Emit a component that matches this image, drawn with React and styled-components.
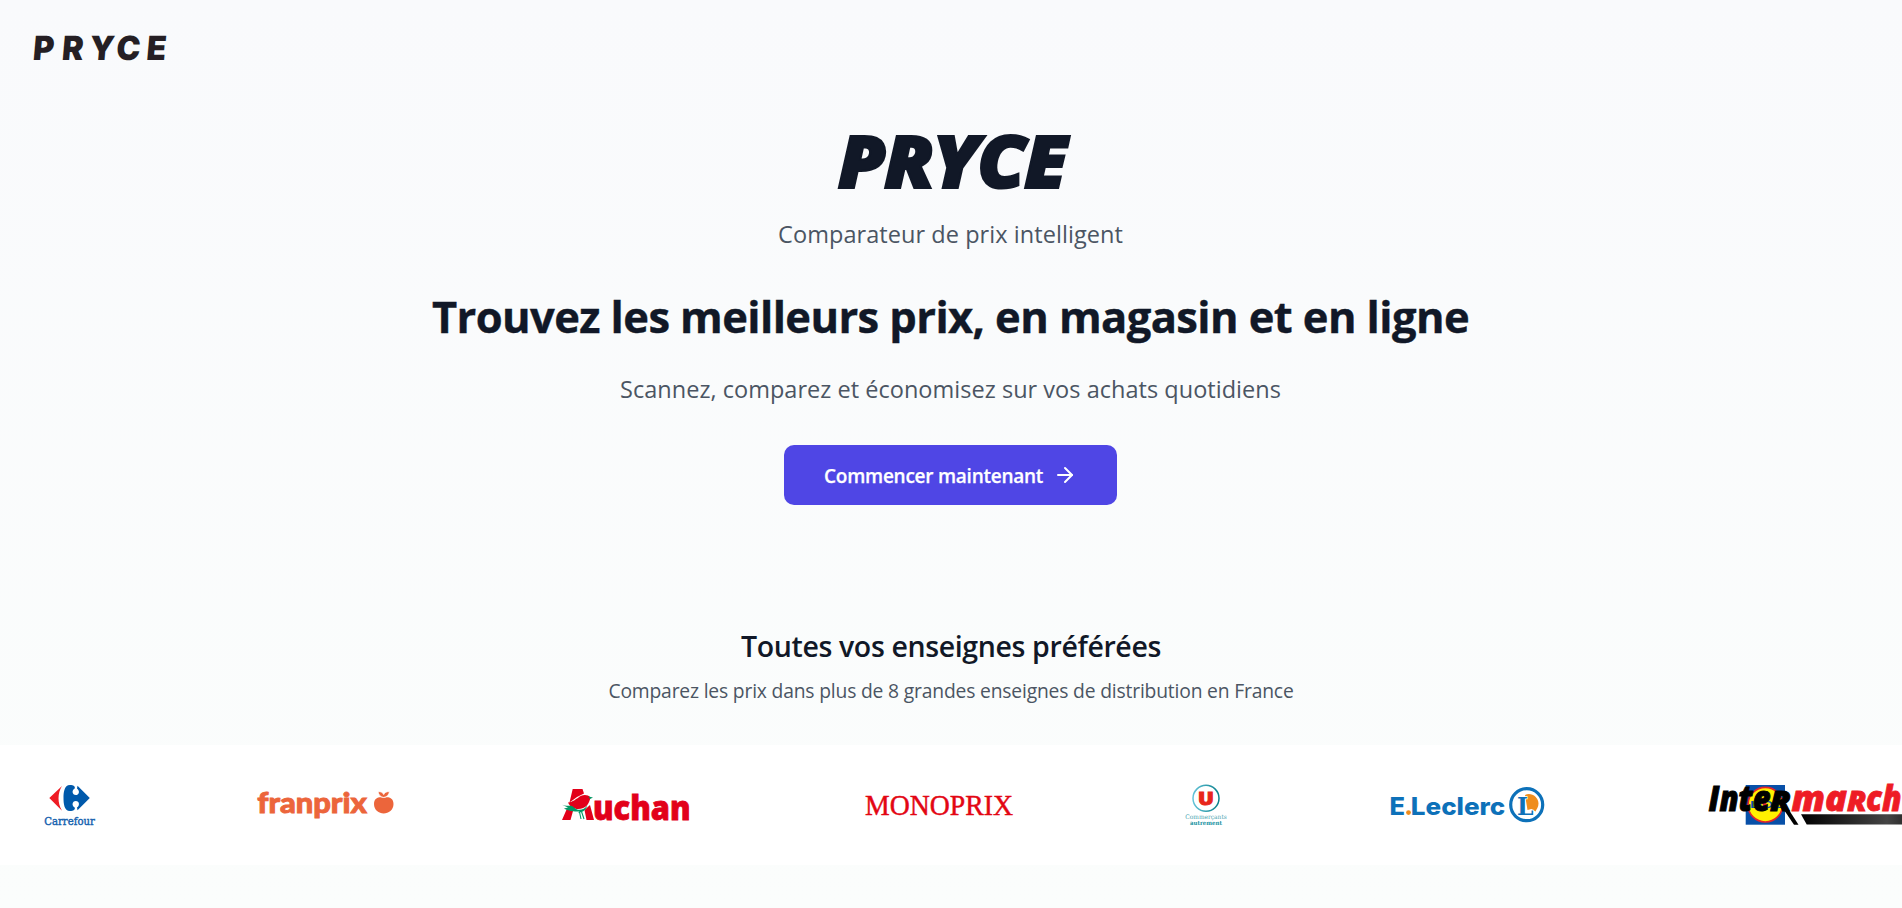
import React from 'react';
import styled, { createGlobalStyle } from 'styled-components';
import { ArrowRight } from 'lucide-react';

const GlobalStyle = createGlobalStyle`
  *, *::before, *::after { box-sizing: border-box; }
  body {
    margin: 0;
    font-family: 'Segoe UI', 'Open Sans', 'Noto Sans', sans-serif;
    color: #111827;
  }
  h1, h2, h3, p { margin: 0; white-space: nowrap; }
`;

const Page = styled.div`
  height: 908px;
  overflow: hidden;
  display: flex;
  flex-direction: column;
  background: linear-gradient(#f9fafc, #fbfdfc);
`;

const Header = styled.header`
  height: 120px;
  padding: 28px 32px;
`;

const HeaderLogo = styled.svg`
  display: block;
  font: 900 33.4px Inter, sans-serif;
  fill: #251f24;
`;

const Hero = styled.main`
  display: flex;
  flex-direction: column;
  align-items: center;
  padding-right: 1px;
`;

const Brand = styled.h1`
  padding-left: 3px;
  font-size: 73px;
  line-height: 80px;
  font-weight: 800;
  font-style: italic;
  letter-spacing: -1.8px;
  -webkit-text-stroke: 2.2px #111827;
  transform: scaleX(1.06);
`;

const Lead = styled.p`
  margin-top: ${(p) => p.$top}px;
  font-size: 23.5px;
  line-height: 32px;
  letter-spacing: ${(p) => p.$spacing}px;
  color: #4b5563;
`;

const Headline = styled.h2`
  margin-top: 39px;
  font-size: 43.5px;
  line-height: 56px;
  font-weight: 700;
  letter-spacing: -0.6px;
  -webkit-text-stroke: 0.4px #111827;
`;

const CallToAction = styled.button`
  display: flex;
  align-items: center;
  justify-content: space-between;
  width: 333px;
  height: 60px;
  margin-top: 40px;
  padding: 0 40px;
  border: 0;
  border-radius: 10px;
  background: #4f46e5;
  color: #fff;
  font-family: inherit;
  font-size: 19px;
  font-weight: 600;
  letter-spacing: -0.25px;
  white-space: nowrap;
`;

const ButtonLabel = styled.span`
  padding-top: 2px;
  -webkit-text-stroke: 0.25px #fff;
`;

const StoresIntro = styled.section`
  display: flex;
  flex-direction: column;
  align-items: center;
  margin-top: 121px;
`;

const StoresTitle = styled.h3`
  font-size: 28.5px;
  line-height: 40px;
  font-weight: 600;
  letter-spacing: -0.37px;
`;

const StoresText = styled.p`
  margin-top: 11px;
  font-size: 19.3px;
  line-height: 28px;
  letter-spacing: -0.18px;
  color: #4b5563;
`;

const Marquee = styled.div`
  display: flex;
  align-items: center;
  gap: 160px;
  height: 120px;
  margin-top: 40px;
  padding-left: 43px;
  overflow: hidden;
  background: #fff;
`;

const StoreLogo = styled.svg`
  flex: none;
  display: block;
  height: 40px;
  overflow: visible;
`;

const Fit = ({ w, children, ...rest }) => (
  <text textLength={w} lengthAdjust="spacingAndGlyphs" {...rest}>{children}</text>
);

const Carrefour = () => (
  <StoreLogo width="53" viewBox="0 0 53 40">
    <path fill="#ee1c25" d="M6.3 13 19 1C14.4 8 14.4 18.500 19 25.700Z" />
    <path fill="#0059ab" d="M27 0C21 0 20.500 8 20.500 13S21 26 27 26C30.500 26 32.500 24.500 31.700 22.500 28.500 21 29 16 32.800 16 36.500 16 37 20.500 34 22.600L34.500 25.300 46.800 13 34.500 .7 34 3.400C37 5.500 36.500 10 32.800 10 29 10 28.500 5 31.700 3.500 32.500 1.500 30.500 0 27 0Z" />
    <Fit x="1.3" y="39.6" w="50.500" fontFamily="DejaVu Serif" fontSize="10.800" fill="#1763af" stroke="#1763af" strokeWidth=".45">Carrefour</Fit>
  </StoreLogo>
);

const Franprix = () => (
  <StoreLogo width="140" viewBox="0 0 140 40">
    <Fit x="1.3" y="28" w="109.500" fontFamily="Lato" fontWeight="900" fontSize="28.500" fill="#ec653b" stroke="#ec653b" strokeWidth=".9">franprix</Fit>
    <path fill="#ec653b" d="M127.700 12.800C131 11.500 137.500 12 137.500 19 137.500 25 132.500 28.500 127.700 28.500S118 25 118 19C118 12 124.500 11.500 127.700 12.800Z" />
    <path fill="#ec653b" stroke="#fff" strokeWidth=".8" d="M122 6.500C125 6.500 127 7.500 127.700 9.500 128.500 7.500 130.500 6.500 133.500 6.500 133 10 130.800 12 127.700 12.500 124.500 12 122.500 10 122 6.500Z" />
  </StoreLogo>
);

const Auchan = () => (
  <StoreLogo width="140" viewBox="0 0 140 40">
    <path fill="#e2001a" d="M16.700 4H26.500L28 8.500 21 12 13.500 17.500ZM11 23.500 17 26 14.500 35H6ZM28.500 25 34 20 38 35H30.500Z" />
    <path fill="#e2001a" d="M12 17.500C17 17 20 14 22.500 12.500 25 10 31 8.500 34.500 12.500 33 19 30 24 22 24 18 24 14 22 12 17.500Z" />
    <path fill="#009864" d="M6 19.800C13 22 15 19.500 18 22.500 22 26.500 28 25 31.500 20.500 30 25 27 26.500 25.500 27L22 28 23.500 26.500C17 27 10 25 8 23.500L12 22.500ZM32.500 11.500 37 12.500 34 14Z" />
    <path d="M23.500 27 25 34M25.500 26.500 28 34" stroke="#009864" strokeWidth="1.100" />
    <Fit x="37" y="34.600" w="97.500" fontFamily="Open Sans" fontWeight="800" fontSize="34" fill="#e2001a" stroke="#e2001a" strokeWidth=".8">uchan</Fit>
  </StoreLogo>
);

const Monoprix = () => (
  <StoreLogo width="164" viewBox="0 0 164 40">
    <Fit x="9" y="29.500" w="148" fontFamily="Liberation Serif" fontSize="29.300" fill="#e30613" stroke="#e30613" strokeWidth=".45">MONOPRIX</Fit>
  </StoreLogo>
);

const SystemeU = () => (
  <StoreLogo width="50" viewBox="0 0 50 40">
    <defs>
      <linearGradient id="u-ring">
        <stop offset="0" stopColor="#63c4d8" />
        <stop offset="1" stopColor="#087e8b" />
      </linearGradient>
    </defs>
    <circle cx="26" cy="13.300" r="13" fill="none" stroke="url(#u-ring)" strokeWidth="1.500" />
    <Fit x="18" y="20.300" w="15.800" fontFamily="Open Sans" fontWeight="800" fontSize="18" fill="#e8251b" stroke="#e8251b" strokeWidth="1">U</Fit>
    <Fit x="5.300" y="34" w="41.500" fontFamily="DejaVu Serif" fontSize="6.300" fill="#4aa5b2">Commerçants</Fit>
    <Fit x="10" y="39.700" w="32" fontFamily="DejaVu Serif" fontWeight="700" fontSize="6" fill="#1592a1">autrement</Fit>
  </StoreLogo>
);

const Leclerc = () => (
  <StoreLogo width="158" viewBox="0 0 158 40">
    <g fontFamily="Inter" fontWeight="800" fontSize="24" fill="#0d71b9">
      <Fit x="-.6" y="29.700" w="15.500">E</Fit>
      <circle cx="18.500" cy="27.600" r="2.400" fill="#ef8d1c" />
      <Fit x="20.800" y="29.700" w="94.500">Leclerc</Fit>
    </g>
    <circle cx="136.700" cy="19.700" r="16" fill="#fff" stroke="#0d71b9" strokeWidth="3.200" />
    <path fill="#ef8d1c" d="M135 10C141 7 148.500 12 148.500 18.500 148.500 22 146.500 24 145.500 26.500L141.500 24 137.500 25Z" />
    <text x="127" y="30" fontFamily="DejaVu Serif" fontWeight="700" fontSize="23.500" fill="#0d71b9" stroke="#fff" strokeWidth="1.600" paintOrder="stroke">L</text>
  </StoreLogo>
);

const IntermarcheLidl = () => (
  <StoreLogo width="216" viewBox="0 0 216 40">
    <defs>
      <linearGradient id="inter-bar">
        <stop offset="0" stopColor="#000" />
        <stop offset=".7" stopColor="#444" />
        <stop offset="1" stopColor="#111" />
      </linearGradient>
    </defs>
    <rect x="37.700" width="39.300" height="39.700" fill="#0850a8" />
    <circle cx="57.300" cy="19.700" r="17.300" fill="#fff000" stroke="#e3242b" strokeWidth="1.600" />
    <Fit x="42" y="23" w="31" fontFamily="Lato" fontWeight="900" fontSize="10" fill="#0850a8">LIDL</Fit>
    <path fill="#e3242b" d="m53 12 5 4 1 7-6-5Z" />
    <g fontFamily="Open Sans" fontStyle="italic" fontWeight="800" fill="#000" stroke="#000" strokeWidth="1">
      <Fit x="0.500" y="26" w="62" fontSize="36">Inte</Fit>
      <Fit x="62" y="26" w="21" fontSize="27.500">R</Fit>
    </g>
    <g fontFamily="Open Sans" fontStyle="italic" fontWeight="800" fill="#ee1c25" stroke="#ee1c25" strokeWidth=".8">
      <Fit x="83.500" y="26" w="55.500" fontSize="36">ma</Fit>
      <Fit x="139" y="26" w="19.500" fontSize="27.500">R</Fit>
      <Fit x="158" y="26" w="35.500" fontSize="36">ch</Fit>
    </g>
    <path d="M74 22 81 25 90.500 39.700H86Z" />
    <path fill="url(#inter-bar)" d="M93 29.300H216V39.500H98.700Z" />
  </StoreLogo>
);

export default function App() {
  return (
    <>
      <GlobalStyle />
      <Page>
        <Header>
          <HeaderLogo width="140" height="40" aria-label="PRYCE">
            <text transform="translate(0 32.3) skewX(-5) scale(.96 1)" x="0.2 30.500 59 87 118.500" y="0">PRYCE</text>
          </HeaderLogo>
        </Header>
        <Hero>
          <Brand>PRYCE</Brand>
          <Lead $top={18} $spacing={0.06}>Comparateur de prix intelligent</Lead>
          <Headline>Trouvez les meilleurs prix, en magasin et en ligne</Headline>
          <Lead $top={28} $spacing={0.03}>Scannez, comparez et économisez sur vos achats quotidiens</Lead>
          <CallToAction>
            <ButtonLabel>Commencer maintenant</ButtonLabel>
            <ArrowRight size={24} />
          </CallToAction>
        </Hero>
        <StoresIntro>
          <StoresTitle>Toutes vos enseignes préférées</StoresTitle>
          <StoresText>Comparez les prix dans plus de 8 grandes enseignes de distribution en France</StoresText>
        </StoresIntro>
        <Marquee>
          <Carrefour />
          <Franprix />
          <Auchan />
          <Monoprix />
          <SystemeU />
          <Leclerc />
          <IntermarcheLidl />
        </Marquee>
      </Page>
    </>
  );
}
